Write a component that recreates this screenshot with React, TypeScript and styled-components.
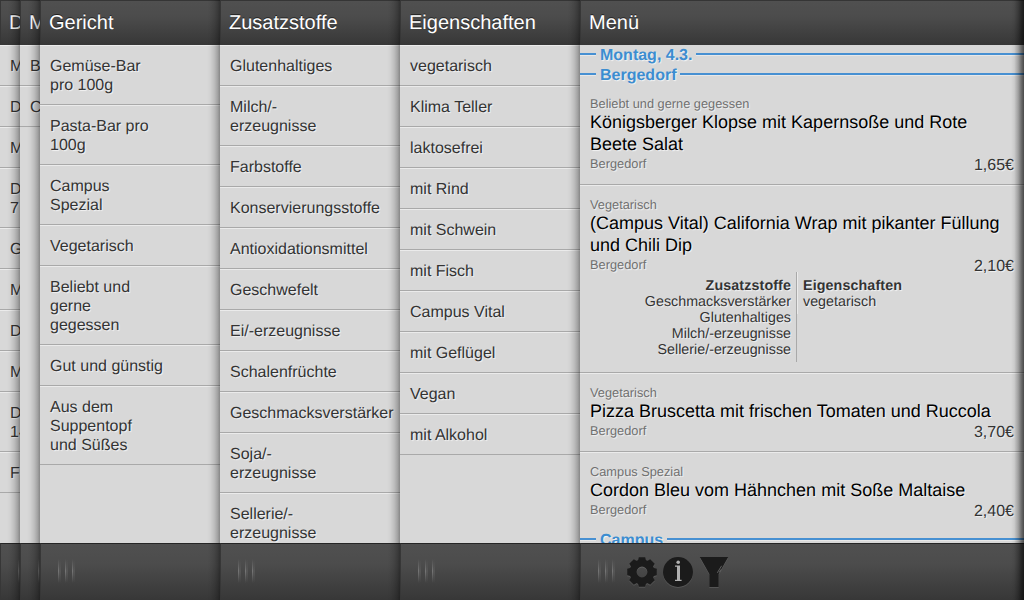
import React from "react";
import styled, { createGlobalStyle, css } from "styled-components";

const GlobalStyle = createGlobalStyle`
  * { box-sizing: border-box; }
  body {
    margin: 0;
    overflow: hidden;
    background: #000;
    font-family: "Liberation Sans", Arial, sans-serif;
    font-size: 16px;
    color: #333;
    text-rendering: geometricPrecision;
  }
`;

const Panels = styled.div`
  display: flex;
  width: 1024px;
  height: 600px;
  overflow: hidden;
`;

const softEdge = css`
  background: linear-gradient(
    to right,
    rgba(0, 0, 0, 0) 0%,
    rgba(0, 0, 0, 0.03) 25%,
    rgba(0, 0, 0, 0.12) 55%,
    rgba(0, 0, 0, 0.24) 80%,
    rgba(0, 0, 0, 0.38) 100%
  );
`;

const deepEdge = css`
  background: linear-gradient(
    to right,
    rgba(0, 0, 0, 0) 0%,
    rgba(0, 0, 0, 0.06) 25%,
    rgba(0, 0, 0, 0.26) 55%,
    rgba(0, 0, 0, 0.5) 80%,
    rgba(0, 0, 0, 0.66) 100%
  );
`;

const Panel = styled.section<{ $width?: number }>`
  position: relative;
  display: flex;
  flex-direction: column;
  ${(p) => (p.$width ? css`flex: 0 0 ${p.$width}px;` : css`flex: 1 1 0;`)}
  min-width: 0;
  overflow: hidden;
  background: #d8d8d8;

  &::after {
    content: "";
    position: absolute;
    top: 0;
    right: 0;
    bottom: 0;
    width: 13px;
    pointer-events: none;
    ${(p) => (p.$width ? softEdge : deepEdge)}
  }
`;

const barSurface = css`
  background: linear-gradient(to bottom, #505050 0%, #4c4c4c 35%, #373737 100%);
  border-left: 1px solid #373737;
`;

const Header = styled.header`
  ${barSurface}
  flex: 0 0 45px;
  padding: 0 8px;
  border-top: 1px solid #353535;
  color: #fff;
  font-size: 20px;
  line-height: 44px;
  white-space: nowrap;
  text-shadow: 0 -1px 0 rgba(0, 0, 0, 0.6);
`;

const Body = styled.div`
  flex: 1 1 0;
  min-height: 0;
  overflow: hidden;
  text-shadow: 1px 1px 1px rgba(255, 255, 255, 0.7);
`;

const Footer = styled.footer`
  ${barSurface}
  display: flex;
  align-items: center;
  flex: 0 0 57px;
  padding: 0 0 2px 17px;
  border-top: 1px solid #262626;
`;

const Entry = styled.div`
  padding: 11px 10px 9px;
  border-top: 1px solid #ebebeb;
  border-bottom: 1px solid #a9a9a9;
  line-height: 19px;
  white-space: pre;
`;

const Grip = styled.div`
  display: flex;
  flex: 0 0 auto;
  gap: 4px;
  height: 24px;
`;

const GripBar = styled.i`
  display: flex;
  width: 3px;

  &::before {
    content: "";
    width: 1px;
    background: linear-gradient(to bottom, rgba(125, 125, 125, 0), #757575 50%, rgba(125, 125, 125, 0));
  }

  &::after {
    content: "";
    width: 2px;
    background: linear-gradient(to bottom, rgba(95, 95, 95, 0), #565656 50%, rgba(95, 95, 95, 0));
  }
`;

const Tools = styled.div`
  display: flex;
  gap: 6px;
  margin: 2px 0 0 12px;
`;

const Icon = styled.svg`
  display: block;
  width: 30px;
  height: 30px;
  filter: drop-shadow(0 1px 0 rgba(255, 255, 255, 0.12));
`;

const Divider = styled.div`
  display: flex;
  align-items: center;
  height: 20px;
  color: #3c8dd0;
  font-weight: bold;
  line-height: 20px;
`;

const Rule = styled.span<{ $lead?: boolean }>`
  ${(p) => (p.$lead ? css`flex: 0 0 16px;` : css`flex: 1;`)}
  height: 2px;
  margin-bottom: 2px;
  background: #4790d2;
  box-shadow: 0 1px 0 #e8e8e8;
`;

const DividerLabel = styled.span`
  padding: 2px 4px 0;
`;

const Meal = styled.article`
  padding: 11px 10px 9px;
  border-top: 1px solid #ebebeb;
  border-bottom: 1px solid #a9a9a9;

  &:first-of-type {
    padding: 10px;
    border-top-color: transparent;
  }

  &:last-of-type { border-bottom-color: transparent; }
`;

const Small = styled.div`
  color: #707070;
  font-size: 12.8px;
  line-height: 15px;
`;

const Place = styled(Small)`
  padding-top: 1px;
`;

const Title = styled.h2`
  margin: 0;
  color: #000;
  font-size: 18px;
  font-weight: normal;
  line-height: 22px;
  white-space: pre;
`;

const MealFoot = styled.div<{ $height: number }>`
  display: flex;
  justify-content: space-between;
  height: ${(p) => p.$height}px;
`;

const Price = styled.span`
  line-height: 22px;
`;

const Details = styled.div`
  display: flex;
  align-items: flex-start;
  height: 90px;
  margin-bottom: 1px;
  font-size: 14.3px;
  line-height: 16px;

  b { letter-spacing: 0.1px; }
`;

const Additives = styled.div`
  width: 207px;
  height: 90px;
  padding: 6px 5px 0 0;
  border-right: 1px solid #a9a9a9;
  text-align: right;
`;

const Traits = styled.div`
  height: 42px;
  padding: 6px 0 0 5px;
  border-left: 1px solid #ebebeb;
`;

type MealData = {
  category: string;
  title: string;
  price: string;
  foot: number;
  additives?: string[];
  traits?: string[];
};

const meals: MealData[] = [
  {
    category: "Beliebt und gerne gegessen",
    title: "Königsberger Klopse mit Kapernsoße und Rote\nBeete Salat",
    price: "1,65€",
    foot: 19,
  },
  {
    category: "Vegetarisch",
    title: "(Campus Vital) California Wrap mit pikanter Füllung\nund Chili Dip",
    price: "2,10€",
    foot: 16,
    additives: ["Geschmacksverstärker", "Glutenhaltiges", "Milch/-erzeugnisse", "Sellerie/-erzeugnisse"],
    traits: ["vegetarisch"],
  },
  {
    category: "Vegetarisch",
    title: "Pizza Bruscetta mit frischen Tomaten und Ruccola",
    price: "3,70€",
    foot: 20,
  },
  {
    category: "Campus Spezial",
    title: "Cordon Bleu vom Hähnchen mit Soße Maltaise",
    price: "2,40€",
    foot: 19,
  },
];

const columns = [
  { title: "D", width: 20, entries: ["M", "D", "M", "D\n7", "G", "M", "D", "M", "D\n14", "F"] },
  { title: "M", width: 20, entries: ["B", "C"] },
  {
    title: "Gericht",
    width: 180,
    entries: [
      "Gemüse-Bar\npro 100g",
      "Pasta-Bar pro\n100g",
      "Campus\nSpezial",
      "Vegetarisch",
      "Beliebt und\ngerne\ngegessen",
      "Gut und günstig",
      "Aus dem\nSuppentopf\nund Süßes",
    ],
  },
  {
    title: "Zusatzstoffe",
    width: 180,
    entries: [
      "Glutenhaltiges",
      "Milch/-\nerzeugnisse",
      "Farbstoffe",
      "Konservierungsstoffe",
      "Antioxidationsmittel",
      "Geschwefelt",
      "Ei/-erzeugnisse",
      "Schalenfrüchte",
      "Geschmacksverstärker",
      "Soja/-\nerzeugnisse",
      "Sellerie/-\nerzeugnisse",
    ],
  },
  {
    title: "Eigenschaften",
    width: 180,
    entries: [
      "vegetarisch",
      "Klima Teller",
      "laktosefrei",
      "mit Rind",
      "mit Schwein",
      "mit Fisch",
      "Campus Vital",
      "mit Geflügel",
      "Vegan",
      "mit Alkohol",
    ],
  },
];

const Grabber = () => (
  <Grip>
    <GripBar />
    <GripBar />
    <GripBar />
  </Grip>
);

const Section = ({ label }: { label: string }) => (
  <Divider>
    <Rule $lead />
    <DividerLabel>{label}</DividerLabel>
    <Rule />
  </Divider>
);

const MealRow = ({ meal }: { meal: MealData }) => (
  <Meal>
    <Small>{meal.category}</Small>
    <Title>{meal.title}</Title>
    <MealFoot $height={meal.foot}>
      <Place>Bergedorf</Place>
      <Price>{meal.price}</Price>
    </MealFoot>
    {meal.additives && (
      <Details>
        <Additives>
          <b>Zusatzstoffe</b>
          {meal.additives.map((a) => (
            <div key={a}>{a}</div>
          ))}
        </Additives>
        <Traits>
          <b>Eigenschaften</b>
          {meal.traits?.map((t) => (
            <div key={t}>{t}</div>
          ))}
        </Traits>
      </Details>
    )}
  </Meal>
);

const GearIcon = () => (
  <Icon viewBox="-15 -15 30 30" fill="#1b1b1b">
    {[0, 45, 90, 135, 180, 225, 270, 315].map((a) => (
      <path key={a} d="M-4.4 -10 L-3.2 -14.8 H3.2 L4.4 -10Z" transform={`rotate(${a})`} />
    ))}
    <circle r="8.9" fill="none" stroke="#1b1b1b" strokeWidth="7" />
  </Icon>
);

const InfoIcon = () => (
  <Icon viewBox="0 0 30 30">
    <circle cx="15" cy="15" r="15" fill="#1b1b1b" />
    <circle cx="15.2" cy="5.2" r="1.8" fill="#b0b0b0" />
    <path d="M12 8.5H17V22.8H18.6V24H12V22.8H14V9.7H12Z" fill="#b0b0b0" />
  </Icon>
);

const FunnelIcon = () => (
  <Icon viewBox="0 0 30 30">
    <path d="M0.8 0H29.2L19.6 17V30H10.4V17Z" fill="#1b1b1b" />
    <path d="M22.6 8.8L18.3 15.8M22 12.4L20.2 15.4" stroke="#666" strokeWidth="0.9" fill="none" />
  </Icon>
);

export default function App() {
  return (
    <>
      <GlobalStyle />
      <Panels>
        {columns.map((col, i) => (
          <Panel key={i} $width={col.width}>
            <Header>{col.title}</Header>
            <Body>
              {col.entries.map((e, j) => (
                <Entry key={j}>{e}</Entry>
              ))}
            </Body>
            <Footer>
              <Grabber />
            </Footer>
          </Panel>
        ))}
        <Panel>
          <Header>Menü</Header>
          <Body>
            <Section label="Montag, 4.3." />
            <Section label="Bergedorf" />
            {meals.map((m) => (
              <MealRow key={m.title} meal={m} />
            ))}
            <Section label="Campus" />
          </Body>
          <Footer>
            <Grabber />
            <Tools>
              <GearIcon />
              <InfoIcon />
              <FunnelIcon />
            </Tools>
          </Footer>
        </Panel>
      </Panels>
    </>
  );
}
